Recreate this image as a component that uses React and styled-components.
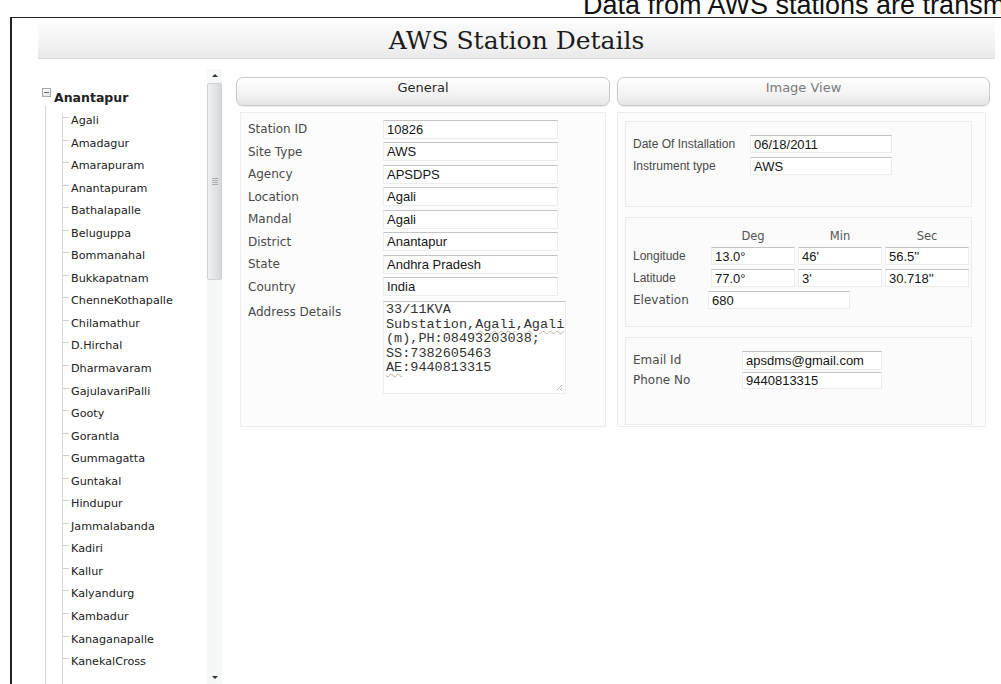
import styled, { createGlobalStyle } from 'styled-components'

const GlobalStyle = createGlobalStyle`
  html, body {
    margin: 0;
    padding: 0;
    background: #fff;
    overflow: hidden;
  }
  * { box-sizing: border-box; }
`

const Page = styled.div`
  width: 1001px;
  height: 684px;
  overflow: hidden;
  display: flex;
  flex-direction: column;
  background: #fff;
`

const Caption = styled.div`
  height: 17px;
  padding-left: 583px;
  overflow: hidden;
  white-space: nowrap;
  display: flex;
  align-items: flex-end;
  font-family: "Liberation Sans", Arial, sans-serif;
  font-size: 27px;
  line-height: 23px;
  color: #111;
`

const Frame = styled.div`
  flex: 1;
  margin-left: 10px;
  border-top: 1px solid #222;
  border-left: 2px solid #222;
  display: flex;
  flex-direction: column;
  min-height: 0;
`

const TitleBar = styled.div`
  margin: 4px 6px 0 26px;
  height: 37px;
  display: flex;
  align-items: center;
  justify-content: center;
  background: linear-gradient(#fbfbfb, #f1f1f1 70%, #e8e8e8);
  border-bottom: 1px solid #dadada;
  font-family: "DejaVu Serif", "Liberation Serif", serif;
  font-size: 25px;
  color: #1c1c1c;
`

const Body = styled.div`
  flex: 1;
  display: flex;
  min-height: 0;
  padding-top: 10px;
`

const Sidebar = styled.div`
  width: 210px;
  padding-left: 26px;
  display: flex;
  min-height: 0;
`

const Tree = styled.div`
  flex: 1;
  overflow: hidden;
  padding: 19px 0 0 4px;
  font-family: "DejaVu Sans", Verdana, sans-serif;
  color: #222;
`

const RootNode = styled.div`
  display: flex;
  align-items: center;
  gap: 3px;
  font-size: 12.5px;
  font-weight: bold;
  height: 18px;
`

const Toggle = styled.span`
  width: 9px;
  height: 9px;
  margin-top: -9px;
  border: 1px solid #aaa;
  background: linear-gradient(#fff, #e6e6e6);
  display: flex;
  align-items: center;
  justify-content: center;
  &::after {
    content: '';
    width: 5px;
    height: 1px;
    background: #666;
  }
`

const Branch = styled.div`
  margin-left: 3px;
  padding: 8px 0 40px 16px;
  border-left: 1px solid #d6d6d6;
`

const Leaves = styled.ul`
  list-style: none;
  margin: 0;
  padding: 0 0 40px 0;
  border-left: 1px solid #d6d6d6;
`

const Leaf = styled.li`
  position: relative;
  height: 22.55px;
  padding-left: 8px;
  font-size: 11.2px;
  line-height: 14px;
  white-space: nowrap;
  &::before {
    content: '';
    position: absolute;
    left: 0;
    top: 3px;
    width: 6px;
    border-top: 1px solid #cfcfcf;
  }
`

const ScrollTrack = styled.div`
  width: 15px;
  display: flex;
  flex-direction: column;
  align-items: stretch;
  background: #f6f7f7;
`

const Arrow = styled.div`
  height: 13px;
  display: flex;
  align-items: center;
  justify-content: center;
  &::after {
    content: '';
    border-left: 3px solid transparent;
    border-right: 3px solid transparent;
    ${p => (p.down ? 'border-top: 3px solid #333;' : 'border-bottom: 3px solid #333;')}
  }
`

const Thumb = styled.div`
  height: 197px;
  margin: 1px 0 0;
  border: 1px solid #cdd1d3;
  border-radius: 2px;
  background: linear-gradient(90deg, #eef0f1, #dfe3e5 60%, #d3d8db);
  display: flex;
  align-items: center;
  justify-content: center;
`

const Grip = styled.div`
  width: 6px;
  height: 7px;
  background: repeating-linear-gradient(#9aa0a3 0 1px, transparent 1px 2px);
  opacity: 0.8;
`

const TrackFill = styled.div`
  flex: 1;
`

const Main = styled.div`
  flex: 1;
  padding: 8px 9px 0 14px;
  display: flex;
  flex-direction: column;
`

const Tabs = styled.div`
  display: grid;
  grid-template-columns: 374px 373px;
  gap: 7px;
`

const Tab = styled.div`
  height: 29px;
  border: 1px solid #c9c9c9;
  border-radius: 7px;
  background: linear-gradient(#ffffff, #f4f4f4 55%, #e6e6e6);
  box-shadow: 0 1px 1px rgba(0, 0, 0, 0.08);
  display: flex;
  align-items: center;
  justify-content: center;
  padding-bottom: 9px;
  font-family: "DejaVu Sans", Verdana, sans-serif;
  font-size: 13px;
  color: ${p => (p.active ? '#262626' : '#7a7a7a')};
`

const Panels = styled.div`
  display: grid;
  grid-template-columns: 366px 369px;
  gap: 11px;
  margin: 6px 0 0 4px;
`

const Panel = styled.div`
  height: 315px;
  border: 1px solid #ececec;
  background: #fcfcfc;
`

const GeneralPanel = styled(Panel)`
  padding: 5px 0 0 7px;
`

const FieldRow = styled.div`
  display: grid;
  grid-template-columns: 135px auto;
  align-items: center;
  height: 22.5px;
`

const Label = styled.span`
  font-family: ${p => (p.narrow ? '"Liberation Sans", Arial, sans-serif' : '"DejaVu Sans", Verdana, sans-serif')};
  font-size: 12px;
  color: #4a4a4a;
  white-space: nowrap;
`

const TopLabel = styled(Label)`
  padding-top: 4px;
`

const Input = styled.div`
  width: ${p => p.w || 175}px;
  height: ${p => p.h || 19}px;
  padding: 0 3px;
  display: flex;
  align-items: center;
  background: #fff;
  border: 1px solid #ececec;
  border-top-color: #c4c4c4;
  font-family: "Liberation Sans", Arial, sans-serif;
  font-size: 13px;
  color: #151515;
  white-space: nowrap;
`

const AddressRow = styled.div`
  display: grid;
  grid-template-columns: 135px auto;
  align-items: start;
  margin-top: 3px;
`

const AddressBox = styled.div`
  position: relative;
  width: 183px;
  height: 93px;
  padding: 1px 2px;
  background: #fff;
  border: 1px solid #ececec;
  border-top-color: #c4c4c4;
  font-family: "Liberation Mono", "Courier New", monospace;
  font-size: 13.5px;
  line-height: 14.5px;
  color: #333;
  white-space: pre;
  overflow: hidden;
`

const Squiggle = styled.span`
  text-decoration: underline wavy #b8ad9c;
  text-decoration-thickness: 1px;
  text-underline-offset: 2px;
`

const ResizeGrip = styled.svg`
  position: absolute;
  right: 2px;
  bottom: 2px;
`

const SidePanel = styled(Panel)`
  padding: 8px 13px 0 7px;
  display: flex;
  flex-direction: column;
  gap: 10px;
`

const Section = styled.div`
  height: ${p => p.h}px;
  padding: ${p => p.pad || '11px 0 0 7px'};
  border: 1px solid #ececec;
  background: #fbfbfb;
`

const InfoRow = styled.div`
  display: grid;
  grid-template-columns: ${p => p.cols || '117px auto'};
  gap: ${p => p.gap || 0}px;
  align-items: center;
  height: ${p => p.h || 22}px;
`

const ColHead = styled.span`
  text-align: center;
  font-family: "DejaVu Sans", Verdana, sans-serif;
  font-size: 11.5px;
  color: #555;
`

const addressLines = [
  '33/11KVA',
  <>Substation,<Squiggle>Agali</Squiggle>,<Squiggle>Agali</Squiggle></>,
  '(m),PH:08493203038;',
  'SS:7382605463',
  <><Squiggle>AE</Squiggle>:9440813315</>,
]

const mandals = [
  'Agali', 'Amadagur', 'Amarapuram', 'Anantapuram', 'Bathalapalle', 'Beluguppa',
  'Bommanahal', 'Bukkapatnam', 'ChenneKothapalle', 'Chilamathur', 'D.Hirchal',
  'Dharmavaram', 'GajulavariPalli', 'Gooty', 'Gorantla', 'Gummagatta', 'Guntakal',
  'Hindupur', 'Jammalabanda', 'Kadiri', 'Kallur', 'Kalyandurg', 'Kambadur',
  'Kanaganapalle', 'KanekalCross',
]

const general = [
  ['Station ID', '10826'],
  ['Site Type', 'AWS'],
  ['Agency', 'APSDPS'],
  ['Location', 'Agali'],
  ['Mandal', 'Agali'],
  ['District', 'Anantapur'],
  ['State', 'Andhra Pradesh'],
  ['Country', 'India'],
]

const coordCols = '75px 84px 84px 84px'

function StationTree() {
  return (
    <Sidebar>
      <Tree>
        <RootNode>
          <Toggle />
          Anantapur
        </RootNode>
        <Branch>
          <Leaves>
            {mandals.map(m => (
              <Leaf key={m}>{m}</Leaf>
            ))}
          </Leaves>
        </Branch>
      </Tree>
      <ScrollTrack>
        <Arrow />
        <Thumb>
          <Grip />
        </Thumb>
        <TrackFill />
        <Arrow down />
      </ScrollTrack>
    </Sidebar>
  )
}

function GeneralTab() {
  return (
    <GeneralPanel>
      {general.map(([label, value]) => (
        <FieldRow key={label}>
          <Label>{label}</Label>
          <Input>{value}</Input>
        </FieldRow>
      ))}
      <AddressRow>
        <TopLabel>Address Details</TopLabel>
        <AddressBox>
          {addressLines.map((line, i) => (
            <div key={i}>{line}</div>
          ))}
          <ResizeGrip width="7" height="7" viewBox="0 0 7 7">
            <path d="M6 1 L1 6 M6 4 L4 6" stroke="#b5b5b5" strokeWidth="1" />
          </ResizeGrip>
        </AddressBox>
      </AddressRow>
    </GeneralPanel>
  )
}

function ImageTab() {
  return (
    <SidePanel>
      <Section h={86}>
        <InfoRow>
          <Label narrow>Date Of Installation</Label>
          <Input w={142} h={18}>06/18/2011</Input>
        </InfoRow>
        <InfoRow>
          <Label narrow>Instrument type</Label>
          <Input w={142} h={18}>AWS</Input>
        </InfoRow>
      </Section>
      <Section h={110} pad="9px 0 0 7px">
        <InfoRow cols={coordCols} gap={3} h={18}>
          <span />
          <ColHead>Deg</ColHead>
          <ColHead>Min</ColHead>
          <ColHead>Sec</ColHead>
        </InfoRow>
        <InfoRow cols={coordCols} gap={3}>
          <Label narrow>Longitude</Label>
          <Input w={84} h={18}>13.0°</Input>
          <Input w={84} h={18}>46'</Input>
          <Input w={84} h={18}>56.5''</Input>
        </InfoRow>
        <InfoRow cols={coordCols} gap={3}>
          <Label narrow>Latitude</Label>
          <Input w={84} h={18}>77.0°</Input>
          <Input w={84} h={18}>3'</Input>
          <Input w={84} h={18}>30.718''</Input>
        </InfoRow>
        <InfoRow cols="75px auto">
          <Label>Elevation</Label>
          <Input w={142} h={18}>680</Input>
        </InfoRow>
      </Section>
      <Section h={88} pad="12px 0 0 7px">
        <InfoRow cols="109px auto" h={20}>
          <Label>Email Id</Label>
          <Input w={140} h={19}>apsdms@gmail.com</Input>
        </InfoRow>
        <InfoRow cols="109px auto" h={20}>
          <Label>Phone No</Label>
          <Input w={140} h={17}>9440813315</Input>
        </InfoRow>
      </Section>
    </SidePanel>
  )
}

export default function App() {
  return (
    <>
      <GlobalStyle />
      <Page>
        <Caption>Data from AWS stations are transmitted to the server</Caption>
        <Frame>
          <TitleBar>AWS Station Details</TitleBar>
          <Body>
            <StationTree />
            <Main>
              <Tabs>
                <Tab active>General</Tab>
                <Tab>Image View</Tab>
              </Tabs>
              <Panels>
                <GeneralTab />
                <ImageTab />
              </Panels>
            </Main>
          </Body>
        </Frame>
      </Page>
    </>
  )
}
